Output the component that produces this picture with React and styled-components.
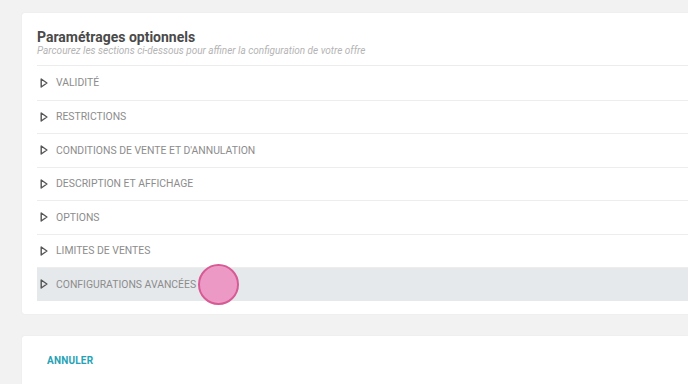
import React from 'react';
import styled, { createGlobalStyle } from 'styled-components';

const GlobalStyle = createGlobalStyle`
  html, body {
    margin: 0;
    padding: 0;
    background: #f2f2f2;
    font-family: Roboto, "Liberation Sans", Arial, sans-serif;
    overflow: hidden;
  }
`;

const Page = styled.div`
  width: 720px;
  padding: 13px 0 0 22px;
  display: flex;
  flex-direction: column;
  gap: 22px;
`;

const Card = styled.div`
  background: #fff;
  border-radius: 3px;
  box-shadow: 0 0 2px rgba(0, 0, 0, 0.06);
  padding: ${(p) => p.$padding || '0'};
`;

const Header = styled.div`
  padding: 16px 0 8px;
  border-bottom: 1px solid #ececec;
`;

const Title = styled.h2`
  margin: 0;
  font-size: 14px;
  font-weight: 700;
  color: #4a4a4a;
  line-height: 16px;
`;

const Subtitle = styled.p`
  margin: 0;
  font-size: 10px;
  font-style: italic;
  color: #b4b4b4;
  line-height: 12px;
`;

const Row = styled.div`
  display: flex;
  align-items: center;
  gap: 8px;
  height: 33.5px;
  padding-left: 3px;
  box-sizing: border-box;
  border-top: ${(p) => (p.$first ? 'none' : '1px solid #ededed')};
  background: ${(p) => (p.$active ? '#e6e9ec' : 'transparent')};
  position: relative;
`;

const Label = styled.span`
  font-size: 10.4px;
  color: #8c8c8c;
`;

const Cursor = styled.div`
  position: absolute;
  left: 161px;
  top: -4px;
  width: 41px;
  height: 41px;
  border-radius: 50%;
  background: rgba(236, 140, 190, 0.85);
  border: 2px solid #d85a95;
  box-sizing: border-box;
`;

const CancelButton = styled.button`
  background: none;
  border: none;
  padding: 0;
  font-family: Roboto, "Liberation Sans", Arial, sans-serif;
  font-size: 10px;
  font-weight: 700;
  line-height: 12px;
  color: #26a2b6;
  letter-spacing: 0.2px;
  cursor: pointer;
`;

const Triangle = () => (
  <svg width="8" height="10" viewBox="0 0 8 10">
    <path d="M1.2 1 L6.9 5 L1.2 9 Z" fill="none" stroke="#555" strokeWidth="1.4" strokeLinejoin="round" />
  </svg>
);

const sections = [
  'VALIDITÉ',
  'RESTRICTIONS',
  "CONDITIONS DE VENTE ET D'ANNULATION",
  'DESCRIPTION ET AFFICHAGE',
  'OPTIONS',
  'LIMITES DE VENTES',
  'CONFIGURATIONS AVANCÉES',
];

export default function App() {
  return (
    <>
      <GlobalStyle />
      <Page>
        <Card $padding="0 0 13px 15px">
          <Header>
            <Title>Paramétrages optionnels</Title>
            <Subtitle>Parcourez les sections ci-dessous pour affiner la configuration de votre offre</Subtitle>
          </Header>
          {sections.map((s, i) => (
            <Row key={s} $first={i === 0} $active={i === sections.length - 1}>
              <Triangle />
              <Label>{s}</Label>
              {i === sections.length - 1 && <Cursor />}
            </Row>
          ))}
        </Card>
        <Card $padding="13px 0 22px 25px">
          <CancelButton>ANNULER</CancelButton>
        </Card>
      </Page>
    </>
  );
}
